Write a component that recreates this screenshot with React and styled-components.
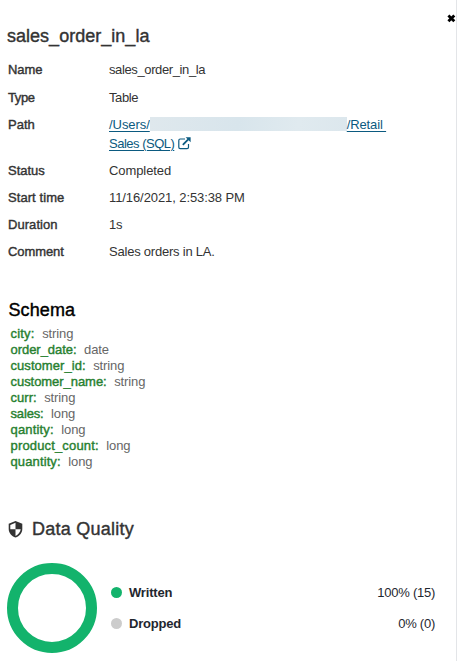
import React from 'react';
import styled, { createGlobalStyle } from 'styled-components';

const GlobalStyle = createGlobalStyle`
  * { box-sizing: border-box; }
  body { margin: 0; background: #fff; }
`;

const Panel = styled.aside`
  position: relative;
  width: 457px;
  height: 661px;
  border-right: 1px solid #e3e5e8;
  overflow: hidden;
  background: #fff;
  color: #333;
  font: 13px/19px "Liberation Sans", Arial, sans-serif;
`;

const Close = styled.button`
  position: absolute;
  top: 14px;
  right: 0;
  width: 9px;
  height: 9px;
  padding: 0;
  border: 0;
  background: none;
  svg { display: block; }
`;

const Text = styled.span`
  letter-spacing: ${(p) => p.$track || 0}px;
  white-space: pre;
`;

const Medium = styled(Text)`
  -webkit-text-stroke: 0.4px currentColor;
`;

const Title = styled.h1`
  margin: 0;
  padding: 25px 0 0 7px;
  font-size: 18px;
  font-weight: 400;
  line-height: 22px;
`;

const Details = styled.dl`
  margin: 9px 0 0;
  padding-left: 8px;
`;

const Detail = styled.div`
  display: grid;
  grid-template-columns: 101px 1fr;
  padding: 4px 0;
  &:first-child { padding-bottom: 5px; }
`;

const Term = styled.dt``;

const Value = styled.dd`
  margin: 0;
`;

const PathLink = styled.a`
  display: block;
  color: #0b5a80;
`;

const PathLine = styled.span`
  display: flex;
  align-items: center;
  height: 19px;
  & > svg { margin-left: 4px; }
`;

const LinkText = styled(Text)`
  text-decoration: underline;
  text-decoration-thickness: 1px;
  text-underline-offset: 2px;
`;

const Redaction = styled.span`
  width: 197px;
  height: 14px;
  margin-top: -1px;
  background: linear-gradient(100deg, #dfe8ed, #d8e5ec 45%, #e0eaef 75%, #dce7ed);
`;

const SchemaSection = styled.section`
  margin-top: 34px;
  padding-left: 8.5px;
`;

const SchemaTitle = styled.h2`
  margin: 0;
  color: #000;
  font-size: 18px;
  font-weight: 400;
  line-height: 22px;
`;

const Fields = styled.ul`
  margin: 5px 0 0;
  padding: 0 0 0 2px;
  list-style: none;
  line-height: 16px;
`;

const Field = styled.li`
  display: flex;
  gap: 7.5px;
  height: 16px;
`;

const FieldName = styled(Medium)`
  color: #27802f;
`;

const FieldType = styled(Text)`
  color: #666;
`;

const QualityTitle = styled.h2`
  display: flex;
  align-items: center;
  gap: 9px;
  height: 22px;
  margin: 48px 0 0;
  padding-left: 8px;
  font-size: 18px;
  font-weight: 400;
`;

const Quality = styled.section`
  display: flex;
  align-items: center;
  gap: 14px;
  margin-top: 23px;
  padding: 0 21px 0 7px;
`;

const Ring = styled.div`
  width: 90px;
  height: 90px;
  border: 11px solid #13b36c;
  border-radius: 50%;
`;

const Legend = styled.div`
  flex: 1;
  display: grid;
  gap: 12px;
  color: #1f272f;
`;

const LegendRow = styled.div`
  display: flex;
  align-items: center;
`;

const Dot = styled.i`
  width: 11px;
  height: 11px;
  margin-right: 7px;
  border-radius: 50%;
  background: ${(p) => p.$color};
`;

const LegendName = styled(Text)`
  flex: 1;
  font-weight: 700;
`;

const fields = [
  ['city:', 'string', 0.2],
  ['order_date:', 'date', -0.04],
  ['customer_id:', 'string', 0.06],
  ['customer_name:', 'string', -0.05],
  ['curr:', 'string', 0.03],
  ['sales:', 'long', -0.15],
  ['qantity:', 'long', 0.17],
  ['product_count:', 'long', 0.16],
  ['quantity:', 'long', 0.12],
];

const CloseIcon = () => (
  <svg width="9" height="9" viewBox="0 0 9 9">
    <path d="M1.400 1.400 7.300 7.300M7.300 1.400 1.400 7.300" stroke="#000" strokeWidth="2.800" />
  </svg>
);

const ExternalIcon = () => (
  <svg width="13" height="13" viewBox="0 0 13 13" fill="none" stroke="currentColor">
    <path d="M7 2H2.2Q.8 2 .8 3.4v6.9q0 1.4 1.4 1.4h6.9q1.4 0 1.4-1.4V7" strokeWidth="1.2" />
    <path d="M4.8 7.8 10.5 2.1" strokeWidth="1.8" />
    <path d="M7.600 .2h5v5Z" fill="currentColor" stroke="none" />
  </svg>
);

const ShieldIcon = () => (
  <svg width="15" height="17" viewBox="0 0 15 17">
    <path d="M7.5 0 14.3 2.7V8c0 4-2.8 7-6.8 8.6C3.5 15 .7 12 .7 8V2.7Z" fill="#333" />
    <path d="M7.5 1.8 2.3 3.9V8.3H7.5ZM7.5 8.3h5.2c-.3 2.9-2.3 5.200-5.200 6.600Z" fill="#fff" />
  </svg>
);

function DetailRow({ label, track, valueTrack, value, children }) {
  return (
    <Detail>
      <Term><Medium $track={track}>{label}</Medium></Term>
      <Value>{children || <Text $track={valueTrack}>{value}</Text>}</Value>
    </Detail>
  );
}

export default function App() {
  return (
    <>
      <GlobalStyle />
      <Panel>
        <Close aria-label="Close"><CloseIcon /></Close>
        <Title><Medium $track={0.02}>sales_order_in_la</Medium></Title>
        <Details>
          <DetailRow label="Name" track={-0.1} value="sales_order_in_la" valueTrack={-0.38} />
          <DetailRow label="Type" track={-0.4} value="Table" valueTrack={-0.4} />
          <DetailRow label="Path" track={0}>
            <PathLink>
              <PathLine>
                <LinkText $track={-0.06}>/Users/</LinkText>
                <Redaction />
                <LinkText $track={-0.14}>{'/Retail '}</LinkText>
              </PathLine>
              <PathLine>
                <LinkText $track={-0.5}>Sales (SQL)</LinkText>
                <ExternalIcon />
              </PathLine>
            </PathLink>
          </DetailRow>
          <DetailRow label="Status" track={0} value="Completed" valueTrack={-0.08} />
          <DetailRow label="Start time" track={0.07} value="11/16/2021, 2:53:38 PM" valueTrack={-0.09} />
          <DetailRow label="Duration" track={0.05} value="1s" valueTrack={-0.3} />
          <DetailRow label="Comment" track={-0.1} value="Sales orders in LA." valueTrack={-0.22} />
        </Details>
        <SchemaSection>
          <SchemaTitle><Medium $track={0.1}>Schema</Medium></SchemaTitle>
          <Fields>
            {fields.map(([name, type, track]) => (
              <Field key={name}>
                <FieldName $track={track}>{name}</FieldName>
                <FieldType $track={-0.1}>{type}</FieldType>
              </Field>
            ))}
          </Fields>
        </SchemaSection>
        <QualityTitle><ShieldIcon /><Medium $track={0.25}>Data Quality</Medium></QualityTitle>
        <Quality>
          <Ring />
          <Legend>
            <LegendRow><Dot $color="#13b36c" /><LegendName $track={-0.18}>Written</LegendName><Text $track={-0.25}>100% (15)</Text></LegendRow>
            <LegendRow><Dot $color="#ccc" /><LegendName $track={-0.22}>Dropped</LegendName><Text $track={-0.25}>0% (0)</Text></LegendRow>
          </Legend>
        </Quality>
      </Panel>
    </>
  );
}
